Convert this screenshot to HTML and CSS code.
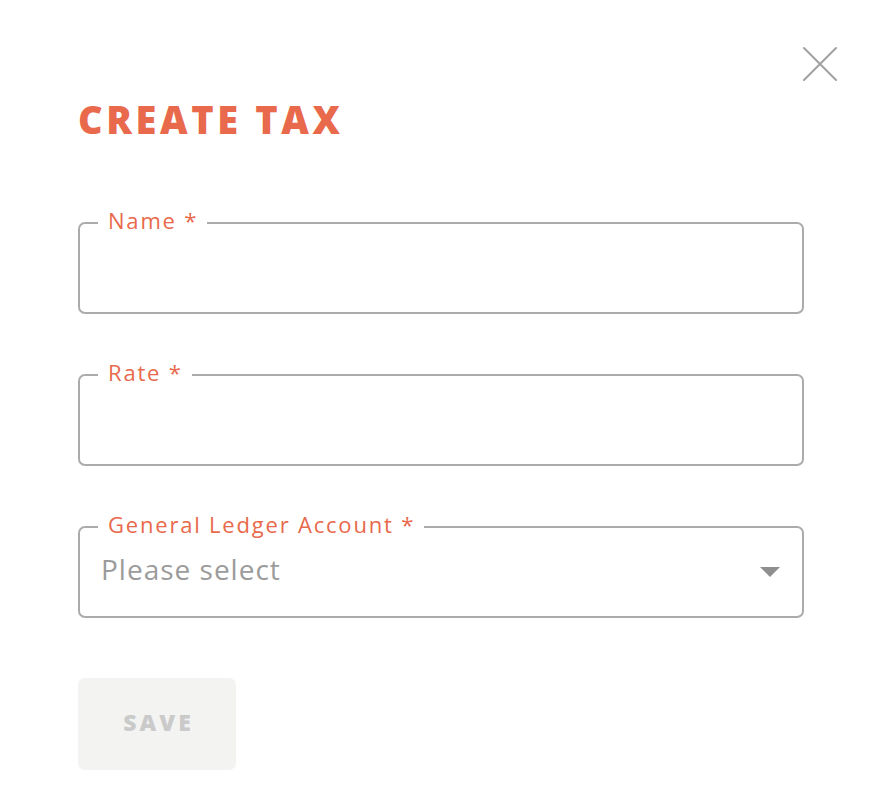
FILE: index.html
```html
<!DOCTYPE html>
<html lang="en">
<head>
<meta charset="utf-8">
<title>Create Tax</title>
<link rel="stylesheet" href="styles.css">
</head>
<body>
<div class="modal">
  <button class="close" aria-label="Close">
    <svg width="36" height="36" viewBox="0 0 36 36"><path d="M2 2 L34 34 M34 2 L2 34" stroke="#a1a19f" stroke-width="2" fill="none" stroke-linecap="round"/></svg>
  </button>
  <h1 class="title">CREATE TAX</h1>
  <form class="form">
    <fieldset class="field">
      <legend class="label">Name *</legend>
      <input class="input" type="text">
    </fieldset>
    <fieldset class="field">
      <legend class="label">Rate *</legend>
      <input class="input" type="text">
    </fieldset>
    <fieldset class="field">
      <legend class="label">General Ledger Account *</legend>
      <div class="select">
        <span class="placeholder">Please select</span>
        <svg class="caret" width="20" height="10" viewBox="0 0 20 10"><path d="M0 0 H20 L10 10 Z" fill="#8f8f8f"/></svg>
      </div>
    </fieldset>
    <button type="button" class="save">SAVE</button>
  </form>
</div>
</body>
</html>
```

FILE: styles.css
```css
html, body {
  margin: 0;
  padding: 0;
  background: #ffffff;
}
body {
  font-family: "Open Sans", "Liberation Sans", sans-serif;
}
.modal {
  position: relative;
  width: 878px;
  height: 790px;
  box-sizing: border-box;
  padding: 96px 74px 0 78px;
}
.close {
  position: absolute;
  top: 46px;
  right: 40px;
  width: 36px;
  height: 36px;
  padding: 0;
  border: 0;
  background: none;
}
.close svg { display: block; }
.title {
  margin: 0;
  font-family: "Open Sans", sans-serif;
  font-weight: 800;
  font-size: 38px;
  line-height: 46px;
  letter-spacing: 3.6px;
  color: #e8694b;
}
.form {
  margin-top: 65px;
  display: flex;
  flex-direction: column;
}
.field {
  margin: 0 0 45px 0;
  padding: 0;
  border: 2px solid #ababab;
  border-radius: 7px;
  height: 107px;
  box-sizing: border-box;
  min-width: 0;
}
.label {
  margin-left: 18px;
  padding: 0 9px 6px 10px;
  font-size: 22px;
  line-height: 26px;
  letter-spacing: 1.8px;
  color: #e8694b;
}
.input {
  display: block;
  width: 100%;
  height: 73px;
  box-sizing: border-box;
  border: 0;
  background: transparent;
  outline: none;
  font-size: 24px;
  padding: 0 20px;
}
.select {
  display: flex;
  align-items: center;
  justify-content: space-between;
  padding: 0 22px 0 21px;
  height: 52px;
  box-sizing: border-box;
  margin-bottom: 21px;
}
.placeholder {
  font-size: 28px;
  letter-spacing: 1px;
  color: #9b9b9b;
}
.caret { display: block; margin-top: 6px; }
.save {
  margin-top: 15px;
  width: 158px;
  height: 92px;
  border: 0;
  border-radius: 7px;
  background: #f3f3f2;
  color: #cacaca;
  font-family: "Open Sans", sans-serif;
  font-weight: 800;
  font-size: 23px;
  letter-spacing: 3px;
  padding: 0 0 4px 3px;
}
```
